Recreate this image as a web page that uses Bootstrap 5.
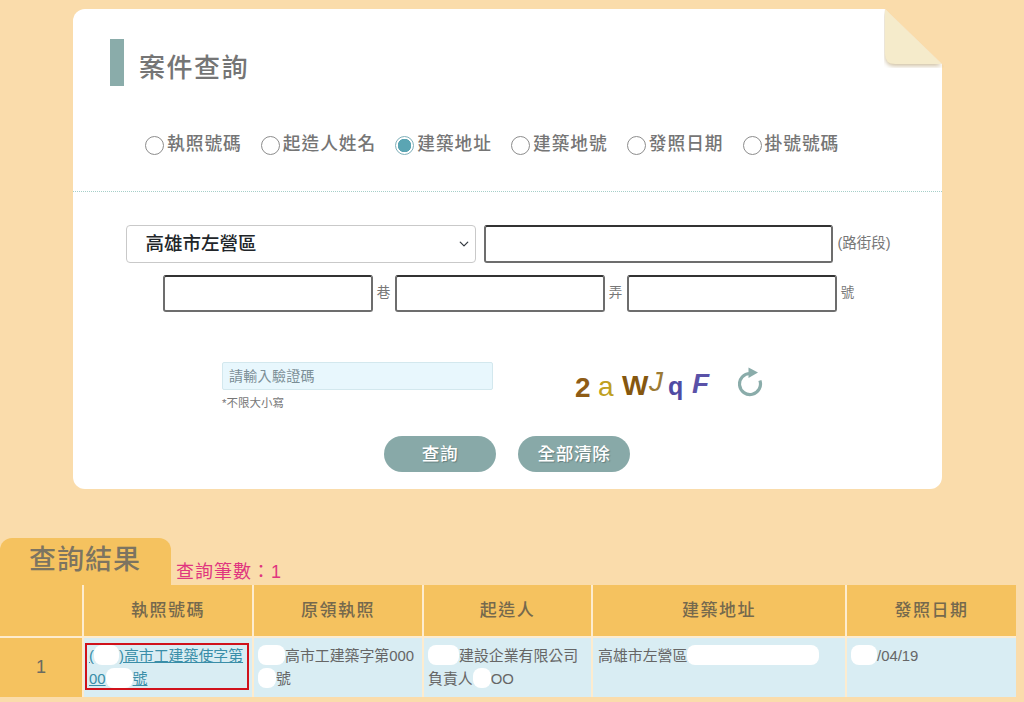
<!DOCTYPE html>
<html lang="zh-Hant">
<head>
  <meta charset="UTF-8" />
  <title>案件查詢</title>
  <meta name="viewport" content="width=device-width, initial-scale=1.0" />
  <link href="https://cdn.jsdelivr.net/npm/bootstrap@5.3.2/dist/css/bootstrap.min.css" rel="stylesheet" />
  <style>
    body {
      font-family: "Liberation Sans", "Noto Sans CJK TC", sans-serif;
      background-color: #fadcab;
      color: #6f6f6f;
      overflow: hidden;
    }

    .query-box {
      position: relative;
      width: 869px;
      height: 480px;
      margin: 9px 0 0 73px;
      padding-top: 30px;
      background: #fff;
      border-radius: 12px;
    }

    .fold-corner {
      position: absolute;
      top: -1px;
      right: -2px;
    }

    .fold-shadow {
      filter: drop-shadow(0 2px 2px rgba(160, 130, 70, .5));
    }

    .box-title {
      height: 47px;
      margin-left: 37px;
      padding-left: 15px;
      border-left: 14px solid #8aacaa;
      font-size: 26px;
      font-weight: 500;
      letter-spacing: 1.5px;
      line-height: 59px;
      color: #757575;
    }

    .search-types {
      height: 106px;
      padding: 48px 0 0 72px;
      border-bottom: 1px dotted #a6cfc9;
    }

    .type-item {
      display: flex;
      align-items: center;
      height: 20px;
      gap: 3px;
      margin-right: 19px;
      font-size: 17.7px;
      font-weight: 500;
      letter-spacing: 1px;
      line-height: 20px;
      color: #757575;
    }

    .type-item .form-check-input {
      width: 19px;
      height: 19px;
      margin: 2px 0 0;
      border-color: #8d8d8d;
    }

    .type-item .form-check-input:checked {
      background-color: #fff;
      background-image: radial-gradient(circle, #5ba5b3 0 6.5px, #fff 7px);
      border-color: #7fb0ba;
    }

    .addr-first {
      margin-top: 33px;
      padding-left: 2px;
    }

    .addr-second {
      margin-top: 12px;
      padding-left: 6px;
    }

    .area-select.form-select {
      width: 350px;
      height: 38px;
      margin-right: 8px;
      padding: 0 30px 0 18px;
      border-color: #c9c9c9;
      border-radius: 4px;
      font-size: 18.5px;
      font-weight: 500;
      color: #212529;
      background-size: 12px 10px;
      background-position: right 5px center;
    }

    .addr-input.form-control {
      height: 38px;
      padding: 2px 6px;
      border: 2px solid #6d6d6d;
      border-top-color: #333;
      border-radius: 3px;
    }

    .addr-road {
      width: 349px;
    }

    .addr-input.addr-part {
      width: 210px;
      height: 37px;
    }

    .addr-unit {
      width: 22px;
      font-size: 13.5px;
      text-align: center;
      color: #777;
    }

    .addr-road-unit {
      width: auto;
      margin-left: 4px;
      font-size: 14.5px;
    }

    .captcha-row {
      margin: 50px 0 0 149px;
    }

    .captcha-left {
      width: 271px;
    }

    .captcha-input.form-control {
      height: 28px;
      padding: 0 6px;
      background: #e8f7fd;
      border: 1px solid #d3e8ee;
      border-radius: 2px;
      font-size: 14px;
    }

    .captcha-input.form-control::placeholder {
      color: #7b8e96;
      letter-spacing: .3px;
    }

    .captcha-note {
      margin-top: 6px;
      font-size: 11.5px;
      line-height: 14px;
      color: #777;
    }

    .captcha-code {
      width: 135px;
      height: 34px;
      margin: 9px 0 0 82px;
      font-size: 28px;
      line-height: 34px;
    }

    .captcha-code span {
      display: block;
    }

    .cc-1 { width: 16px; color: #8e5c16; font-weight: 700; }
    .cc-2 { width: 17px; margin-left: 7px; color: #bfa021; transform: translateY(-1px); }
    .cc-3 { width: 26px; margin-left: 7px; color: #85570f; font-weight: 700; transform: translateY(-2px); }
    .cc-4 { width: 14px; margin-left: 1px; color: #9b7a35; font-style: italic; transform: translateY(-6px); }
    .cc-5 { width: 14px; margin-left: 5px; color: #4f4ba3; font-size: 25px; font-weight: 700; transform: translateY(-2px); }
    .cc-6 { width: 18px; margin-left: 10px; color: #5a52a8; font-style: italic; font-weight: 700; transform: translateY(-4px); }

    .captcha-refresh {
      margin: 5px 0 0 28px;
    }

    .action-row {
      margin: 26px 0 0 311px;
      gap: 22px;
    }

    .action-btn.btn {
      width: 112px;
      height: 36px;
      padding: 0;
      background: #88a9a8;
      border: 0;
      border-radius: 18px;
      font-size: 17.6px;
      font-weight: 500;
      color: #fff;
      letter-spacing: .6px;
      text-shadow: 1px 1px 1px rgba(0, 0, 0, .25);
    }

    .result-head {
      margin-top: 49px;
      height: 47px;
    }

    .result-tab {
      width: 171px;
      height: 47px;
      background: #f5c25f;
      border-radius: 12px 12px 0 0;
      padding-left: 29px;
      font-size: 27px;
      font-weight: 500;
      letter-spacing: 1px;
      line-height: 44px;
      color: #7c7461;
    }

    .result-count {
      margin: 0 0 2px 5px;
      font-size: 18px;
      letter-spacing: 1px;
      line-height: 22px;
      color: #e0357f;
    }

    .result-table.table {
      width: 1016px;
      margin: 0;
      table-layout: fixed;
      border-collapse: collapse;
      --bs-table-bg: transparent;
    }

    .result-table th,
    .result-table td {
      border: 0;
      border-right: 2px solid #fdeccf;
    }

    .result-table th {
      height: 52px;
      padding: 0;
      background: #f5c25f;
      border-bottom: 2px solid #fdeccf;
      font-size: 17px;
      font-weight: 500;
      letter-spacing: 1.5px;
      text-align: center;
      vertical-align: middle;
      color: #75694d;
    }

    .result-table td {
      height: 60px;
      padding: 7px 4px 0;
      background: #d9edf3;
      font-size: 14.9px;
      line-height: 23px;
      vertical-align: top;
      color: #666;
    }

    .result-table td.row-no {
      padding: 0;
      background: #f5c25f;
      font-size: 18px;
      text-align: center;
      vertical-align: middle;
      color: #6b6b60;
    }

    .result-table td.cell-last,
    .result-table th.cell-last {
      border-right: 0;
    }

    .result-table td.cell-addr {
      padding-left: 5px;
    }

    .permit-link {
      display: block;
      height: 47px;
      margin: -2px -1px 0 -3px;
      padding: 0 2px;
      border: 2px solid #d0121b;
      white-space: nowrap;
      color: #3a8ea8;
    }

    .mask {
      display: inline-block;
      height: 20px;
      background: #fff;
      border-radius: 8px;
      vertical-align: -4px;
    }
  </style>
</head>
<body>
  <div class="query-box">
    <svg class="fold-corner" width="60" height="60" viewBox="0 0 60 60">
      <path class="fold-shadow" d="M1 1 L58 56 L11 56 Q1 56 1 46 Z" fill="#f5ebcb" />
      <polygon points="0,0 60,0 60,58 58,56 1,1" fill="#fadcab" />
    </svg>

    <div class="box-title">案件查詢</div>

    <div class="search-types d-flex">
      <label class="type-item"><input class="form-check-input" type="radio" name="qtype" />執照號碼</label>
      <label class="type-item"><input class="form-check-input" type="radio" name="qtype" />起造人姓名</label>
      <label class="type-item"><input class="form-check-input" type="radio" name="qtype" checked />建築地址</label>
      <label class="type-item"><input class="form-check-input" type="radio" name="qtype" />建築地號</label>
      <label class="type-item"><input class="form-check-input" type="radio" name="qtype" />發照日期</label>
      <label class="type-item"><input class="form-check-input" type="radio" name="qtype" />掛號號碼</label>
    </div>

    <div class="addr-first d-flex justify-content-center align-items-center">
      <select class="form-select area-select"><option>高雄市左營區</option></select>
      <input class="form-control addr-input addr-road" type="text" />
      <span class="addr-unit addr-road-unit">(路街段)</span>
    </div>
    <div class="addr-second d-flex justify-content-center align-items-center">
      <input class="form-control addr-input addr-part" type="text" />
      <span class="addr-unit">巷</span>
      <input class="form-control addr-input addr-part" type="text" />
      <span class="addr-unit">弄</span>
      <input class="form-control addr-input addr-part" type="text" />
      <span class="addr-unit">號</span>
    </div>

    <div class="captcha-row d-flex">
      <div class="captcha-left">
        <input class="form-control captcha-input" type="text" placeholder="請輸入驗證碼" />
        <div class="captcha-note">*不限大小寫</div>
      </div>
      <div class="captcha-code d-flex">
        <span class="cc-1">2</span><span class="cc-2">a</span><span class="cc-3">W</span><span class="cc-4">J</span><span class="cc-5">q</span><span class="cc-6">F</span>
      </div>
      <svg class="captcha-refresh" width="26" height="32" viewBox="0 0 26 32">
        <path d="M12 6.5 A10.5 10.5 0 1 0 21.9 13.5" fill="none" stroke="#8aacaa" stroke-width="3.2" />
        <polygon points="10.5,0.5 20,5.5 10.5,11" fill="#8aacaa" />
      </svg>
    </div>

    <div class="action-row d-flex">
      <button class="btn action-btn" type="button">查詢</button>
      <button class="btn action-btn" type="button">全部清除</button>
    </div>
  </div>

  <div class="result-head d-flex align-items-end">
    <div class="result-tab">查詢結果</div>
    <div class="result-count">查詢筆數：1</div>
  </div>

  <table class="table result-table">
    <colgroup>
      <col width="83" /><col width="170" /><col width="170" /><col width="169" /><col width="254" /><col width="170" />
    </colgroup>
    <thead>
      <tr>
        <th></th>
        <th>執照號碼</th>
        <th>原領執照</th>
        <th>起造人</th>
        <th>建築地址</th>
        <th class="cell-last">發照日期</th>
      </tr>
    </thead>
    <tbody>
      <tr>
        <td class="row-no">1</td>
        <td><a class="permit-link" href="#">(<span class="mask" style="width:25px"></span>)高市工建築使字第<br />00<span class="mask" style="width:27px"></span>號</a></td>
        <td><span class="mask" style="width:27px"></span>高市工建築字第000<br /><span class="mask" style="width:18px"></span>號</td>
        <td><span class="mask" style="width:31px"></span>建設企業有限公司<br />負責人<span class="mask" style="width:18px"></span>OO</td>
        <td class="cell-addr">高雄市左營區<span class="mask" style="width:132px"></span></td>
        <td class="cell-last"><span class="mask" style="width:26px"></span>/04/19</td>
      </tr>
    </tbody>
  </table>
</body>
</html>
